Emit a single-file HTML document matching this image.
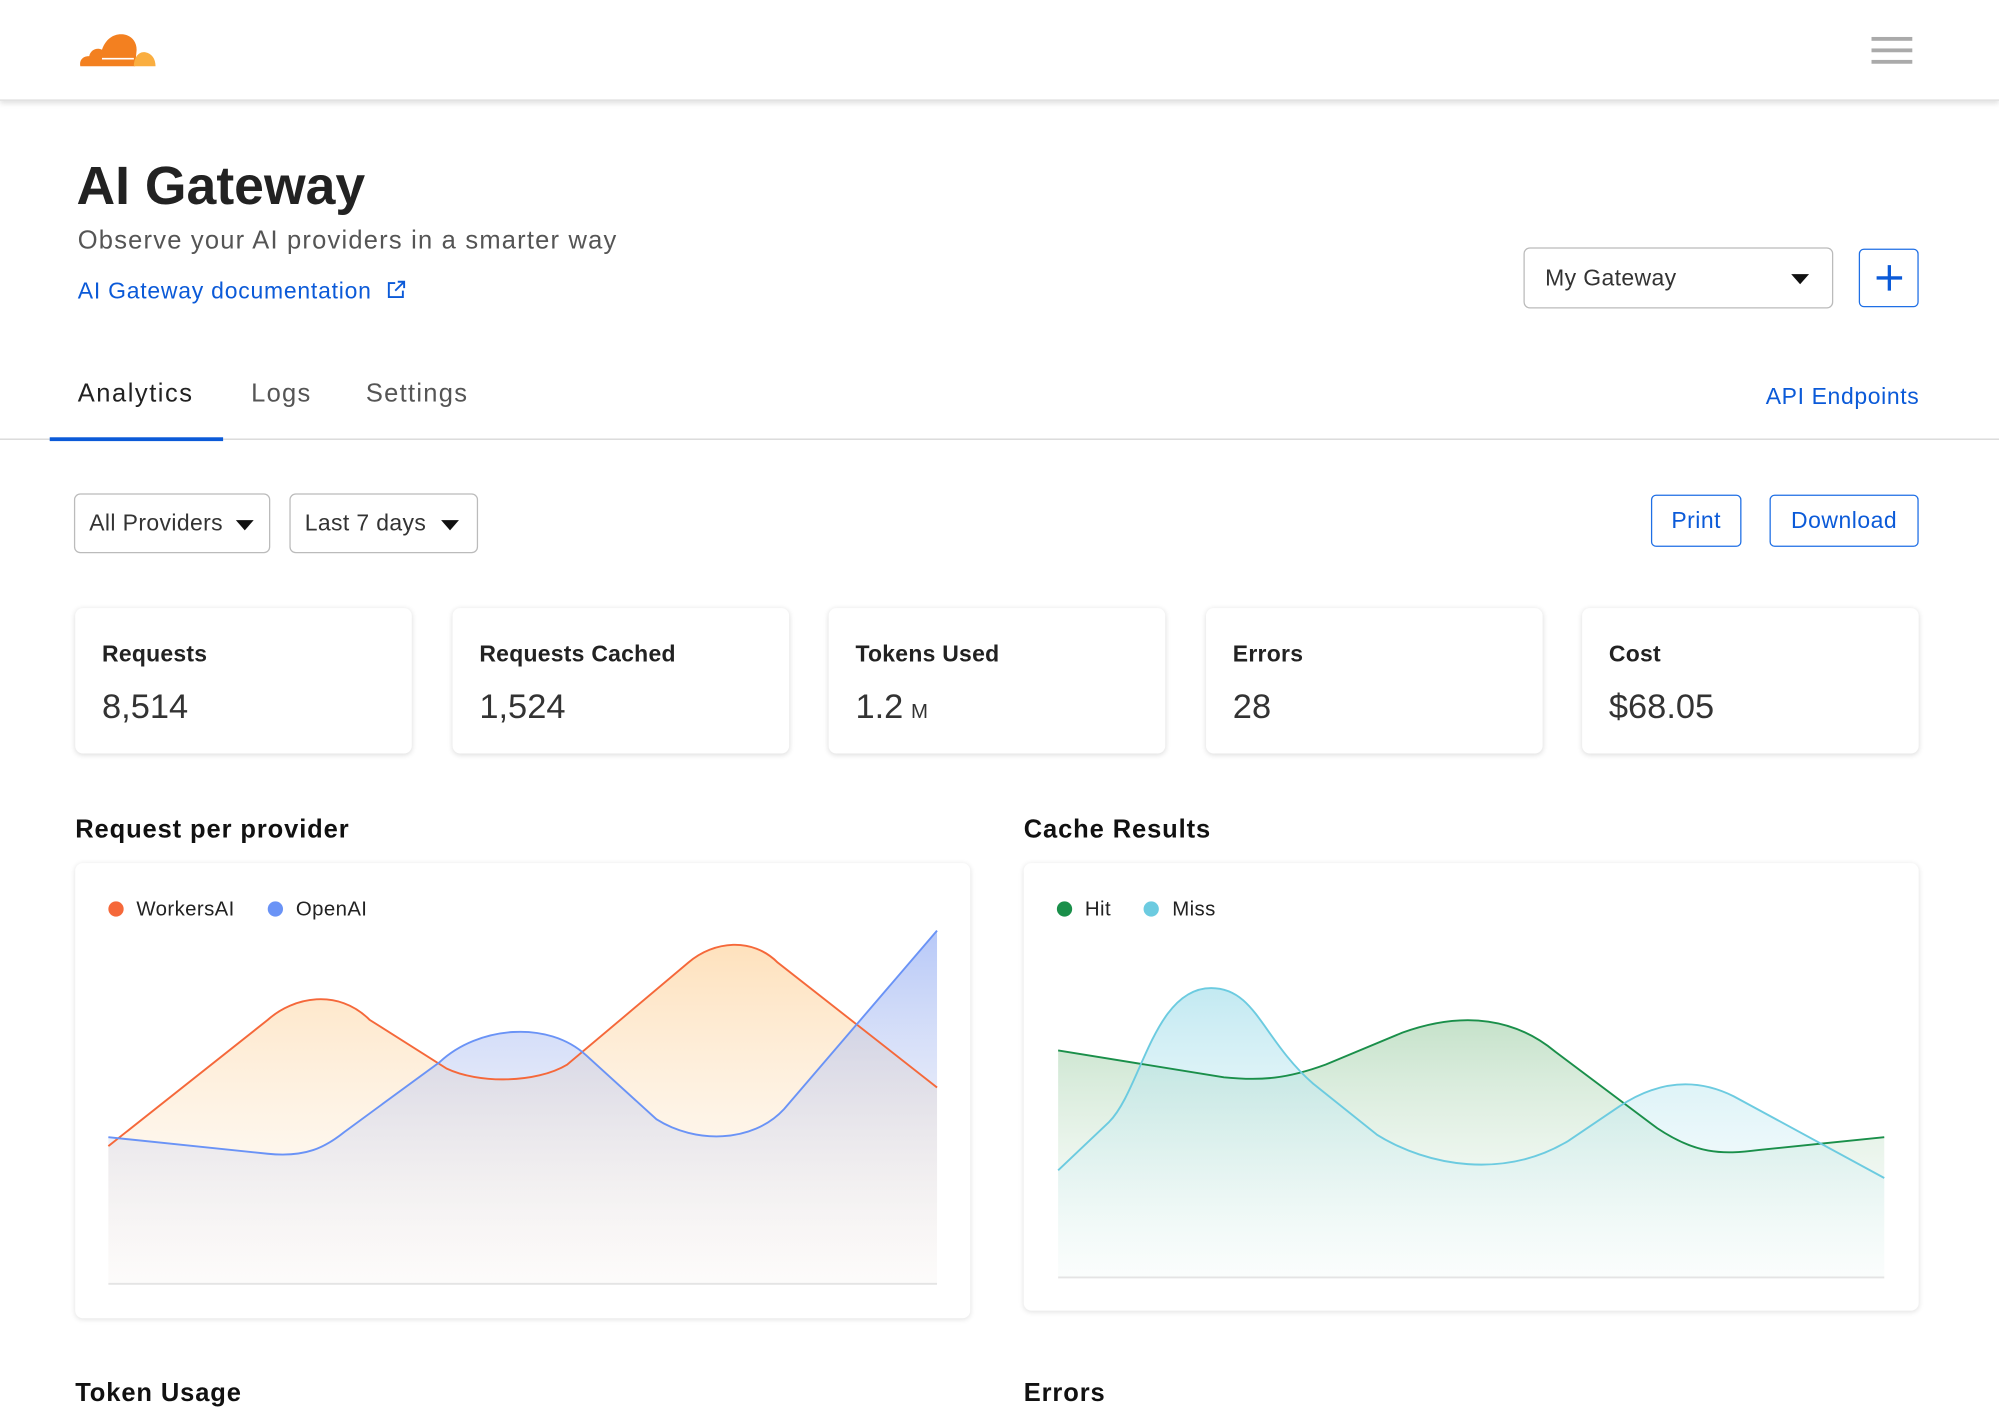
<!DOCTYPE html>
<html><head><meta charset="utf-8"><style>
html,body{margin:0;padding:0;background:#fff;overflow:hidden}
body{width:1999px;height:1418px;font-family:"Liberation Sans",sans-serif;color:#222}
#w{position:absolute;left:0;top:0;width:1568px;height:1112px;transform:scale(1.27487);transform-origin:0 0}
.a{position:absolute;white-space:nowrap}
.hdr{position:absolute;left:0;top:0;width:1568px;height:78px;background:#fff;border-bottom:1px solid #ddd;box-shadow:0 2px 4px rgba(0,0,0,.12)}
.btn{position:absolute;border:1.5px solid #1f6fe5;border-radius:4px;color:#0b5ad8;font-size:18px;display:flex;align-items:center;justify-content:center;box-sizing:border-box;letter-spacing:.4px}
.sel{position:absolute;border:1.5px solid #bbb;border-radius:5px;box-sizing:border-box;font-size:18px;color:#333;display:flex;align-items:center;letter-spacing:.3px}
.tri{width:0;height:0;border-left:7px solid transparent;border-right:7px solid transparent;border-top:8px solid #111;position:absolute}
.card{position:absolute;top:477px;height:114px;width:264px;background:#fff;border-radius:6px;box-shadow:0 1px 4px rgba(0,0,0,.14)}
.card .l{position:absolute;left:21px;top:26px;font-size:18px;font-weight:bold;color:#222;letter-spacing:.2px}
.card .v{position:absolute;left:21px;top:62px;font-size:27px;color:#333}
.st{position:absolute;font-size:20px;font-weight:bold;color:#111;letter-spacing:.7px}
.cc{position:absolute;background:#fff;border-radius:6px;box-shadow:0 1px 4px rgba(0,0,0,.12)}
.dot{display:inline-block;width:12px;height:12px;border-radius:50%;vertical-align:-1px;margin-right:10px}
</style></head><body><div id="w">
<div class="hdr"></div>
<svg class="a" style="left:60px;top:24px" width="64" height="30" viewBox="0 0 64 30">
<path d="M3 28 C2 23 5 20 10 20 C11 15 16 13 20 15 C23 6 30 2 37 3 C44 4 48 10 47 17 L46 28 Z" fill="#f38020"/>
<path d="M45 28 C45 21 49 16 54 17 C59 18 62 22 62 28 Z" fill="#faae40"/>
<path d="M20 22 L45 22" stroke="#fff" stroke-width="1.3"/>
</svg>
<div class="a" style="left:1468px;top:29px;width:32px;height:3px;background:#aaa"></div>
<div class="a" style="left:1468px;top:38px;width:32px;height:3px;background:#aaa"></div>
<div class="a" style="left:1468px;top:47px;width:32px;height:3px;background:#aaa"></div>

<div class="a" style="left:60px;top:122px;font-size:42px;font-weight:bold;color:#222">AI Gateway</div>
<div class="a" style="left:61px;top:178px;font-size:20px;color:#555;letter-spacing:.95px">Observe your AI providers in a smarter way</div>
<div class="a" style="left:61px;top:218px;font-size:18px;color:#0b5ad8;letter-spacing:.6px">AI Gateway documentation
<svg width="16" height="16" viewBox="0 0 16 16" style="margin-left:6px;vertical-align:-1px"><path d="M7 3H2v11h11V9M9 2h5v5M14 2L7 9" fill="none" stroke="#0b5ad8" stroke-width="1.5"/></svg></div>

<div class="sel" style="left:1195px;top:194px;width:243px;height:48px;padding-left:16px">My Gateway<div class="tri" style="right:18px;top:20px"></div></div>
<div class="btn" style="left:1458px;top:195px;width:47px;height:46px;"><svg width="22" height="22" viewBox="0 0 22 22"><path d="M11 1V21M1 11H21" stroke="#0b5ad8" stroke-width="2.6"/></svg></div>

<div class="a" style="left:61px;top:298px;font-size:20px;color:#222;letter-spacing:1.2px">Analytics</div>
<div class="a" style="left:197px;top:298px;font-size:20px;color:#555;letter-spacing:1px">Logs</div>
<div class="a" style="left:287px;top:298px;font-size:20px;color:#555;letter-spacing:1px">Settings</div>
<div class="a" style="left:1385px;top:301px;font-size:18px;color:#0b5ad8;letter-spacing:.5px">API Endpoints</div>
<div class="a" style="left:0;top:344px;width:1568px;height:1px;background:#d5d5d5"></div>
<div class="a" style="left:39px;top:343px;width:136px;height:3px;background:#0b5ad8"></div>

<div class="sel" style="left:58px;top:387px;width:154px;height:47px;padding-left:11px">All Providers<div class="tri" style="right:12px;top:20px"></div></div>
<div class="sel" style="left:227px;top:387px;width:148px;height:47px;padding-left:11px">Last 7 days<div class="tri" style="right:14px;top:20px"></div></div>
<div class="btn" style="left:1295px;top:388px;width:71px;height:41px">Print</div>
<div class="btn" style="left:1388px;top:388px;width:117px;height:41px">Download</div>

<div class="card" style="left:59px"><div class="l">Requests</div><div class="v">8,514</div></div>
<div class="card" style="left:355px"><div class="l">Requests Cached</div><div class="v">1,524</div></div>
<div class="card" style="left:650px"><div class="l">Tokens Used</div><div class="v">1.2<span style="font-size:16px;margin-left:6px">M</span></div></div>
<div class="card" style="left:946px"><div class="l">Errors</div><div class="v">28</div></div>
<div class="card" style="left:1241px"><div class="l">Cost</div><div class="v">$68.05</div></div>

<div class="st" style="left:59px;top:640px">Request per provider</div>
<div class="st" style="left:803px;top:640px">Cache Results</div>
<div class="cc" style="left:59px;top:677px;width:702px;height:357px"></div>
<div class="cc" style="left:803px;top:677px;width:702px;height:351px"></div>
<div class="a" style="left:85px;top:705px;font-size:16px;color:#222;letter-spacing:.3px"><span class="dot" style="background:#f5683a"></span>WorkersAI<span class="dot" style="background:#6a93f6;margin-left:26px"></span>OpenAI</div>
<div class="a" style="left:829px;top:705px;font-size:16px;color:#222;letter-spacing:.3px"><span class="dot" style="background:#1a8f4a"></span>Hit<span class="dot" style="background:#6ccbe0;margin-left:26px"></span>Miss</div>

<svg class="a" style="left:0;top:0" width="1568" height="1112">
<defs>
<linearGradient id="go" x1="0" y1="740" x2="0" y2="1007" gradientUnits="userSpaceOnUse"><stop offset="0" stop-color="#fdd7a6" stop-opacity=".75"/><stop offset="1" stop-color="#fdf0e0" stop-opacity=".1"/></linearGradient>
<linearGradient id="gb" x1="0" y1="730" x2="0" y2="1007" gradientUnits="userSpaceOnUse"><stop offset="0" stop-color="#9fb6f6" stop-opacity=".75"/><stop offset="1" stop-color="#e8e8ee" stop-opacity=".1"/></linearGradient>
<linearGradient id="gg" x1="0" y1="800" x2="0" y2="1002" gradientUnits="userSpaceOnUse"><stop offset="0" stop-color="#a6d2ad" stop-opacity=".65"/><stop offset="1" stop-color="#e8f4ea" stop-opacity=".1"/></linearGradient>
<linearGradient id="gc" x1="0" y1="775" x2="0" y2="1002" gradientUnits="userSpaceOnUse"><stop offset="0" stop-color="#a9e0ec" stop-opacity=".7"/><stop offset="1" stop-color="#e6f6f8" stop-opacity=".1"/></linearGradient>
</defs>
<path d="M85,899 L210,800 C230,782 265,775 290,800 L350,838 C375,850 420,850 445,835 L540,755 C560,738 590,735 610,755 L735,853 L735,1007 L85,1007Z" fill="url(#go)"/>
<path d="M85,892 L210,905 C240,908 255,900 270,888 L345,833 C375,805 430,800 460,828 L515,878 C545,897 590,897 615,870 L735,730 L735,1007 L85,1007Z" fill="url(#gb)"/>
<path d="M85,899 L210,800 C230,782 265,775 290,800 L350,838 C375,850 420,850 445,835 L540,755 C560,738 590,735 610,755 L735,853" fill="none" stroke="#f5683a" stroke-width="1.5"/>
<path d="M85,892 L210,905 C240,908 255,900 270,888 L345,833 C375,805 430,800 460,828 L515,878 C545,897 590,897 615,870 L735,730" fill="none" stroke="#6a93f6" stroke-width="1.5"/>
<path d="M85,1007H735" stroke="#e4e4e4" stroke-width="1.5"/>

<path d="M830,824 L960,845 C990,848 1010,846 1040,835 L1100,810 C1150,792 1190,800 1220,825 L1300,885 C1330,905 1350,906 1380,902 L1478,892 L1478,1002 L830,1002Z" fill="url(#gg)"/>
<path d="M830,918 L870,880 C895,855 905,775 950,775 C985,775 990,815 1030,850 L1080,890 C1120,915 1180,925 1230,895 L1270,868 C1300,848 1330,845 1360,860 L1478,924 L1478,1002 L830,1002Z" fill="url(#gc)"/>
<path d="M830,824 L960,845 C990,848 1010,846 1040,835 L1100,810 C1150,792 1190,800 1220,825 L1300,885 C1330,905 1350,906 1380,902 L1478,892" fill="none" stroke="#1a8f4a" stroke-width="1.5"/>
<path d="M830,918 L870,880 C895,855 905,775 950,775 C985,775 990,815 1030,850 L1080,890 C1120,915 1180,925 1230,895 L1270,868 C1300,848 1330,845 1360,860 L1478,924" fill="none" stroke="#6ccbe0" stroke-width="1.5"/>
<path d="M830,1002H1478" stroke="#e4e4e4" stroke-width="1.5"/>
</svg>

<div class="st" style="left:59px;top:1082px">Token Usage</div>
<div class="st" style="left:803px;top:1082px">Errors</div>
</div></body></html>
